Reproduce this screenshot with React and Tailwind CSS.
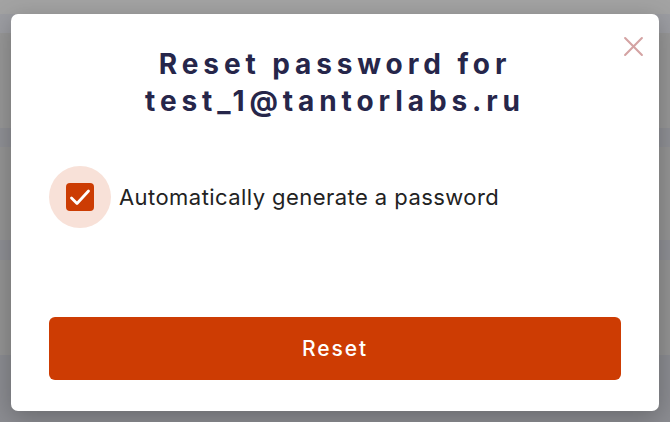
import React from "react";

const bands = [
  ["h-[14px]", "bg-[#a3a3a3]"],
  ["h-[19px]", "bg-[#9c9da2]"],
  ["h-[95px]", "bg-[#979797]"],
  ["h-[19px]", "bg-[#8f9095]"],
  ["h-[93px]", "bg-[#949494]"],
  ["h-[20px]", "bg-[#8e8f94]"],
  ["h-[95px]", "bg-[#939393]"],
  ["h-[67px]", "bg-[#8b8c91]"],
];

export default () => {
  const [checked, setChecked] = React.useState(true);

  return (
    <div
      className="relative w-[670px] h-[422px] overflow-hidden"
      style={{ fontFamily: "Inter, 'Noto Sans', sans-serif" }}
    >
      <div className="flex flex-col">
        {bands.map(([h, bg], i) => (
          <div key={i} className={`${h} ${bg}`} />
        ))}
      </div>

      <div className="absolute left-[11px] top-[14px] w-[648px] h-[397px] bg-white rounded-[7px] shadow-[0_6px_24px_rgba(0,0,0,0.25)] flex flex-col px-[38px] pb-[31px]">
        <button className="absolute right-[15px] top-[21px] w-[22px] h-[22px] flex items-center justify-center">
          <svg width="21" height="21" viewBox="0 0 20 20">
            <path
              d="M2 2 L18 18 M18 2 L2 18"
              stroke="#d4a3a3"
              strokeWidth="2"
              strokeLinecap="round"
            />
          </svg>
        </button>

        <h2 className="mt-[32px] text-center text-[28px] leading-[37px] font-bold tracking-[0.175em] text-[#26264a]">
          Reset password for
          <br />
          test_1@tantorlabs.ru
        </h2>

        <label className="mt-[46px] flex items-center gap-[8px] cursor-pointer">
          <span className="w-[62px] h-[62px] rounded-full bg-[#f8e1d8] flex items-center justify-center">
            <span
              onClick={() => setChecked(!checked)}
              className={`w-[28px] h-[28px] rounded-[4px] flex items-center justify-center ${
                checked ? "bg-[#cc3c03]" : "bg-white border-2 border-gray-400"
              }`}
            >
              {checked && (
                <svg width="28" height="28" viewBox="0 0 28 28">
                  <path
                    d="M5.5 15 L11 20.5 L22.5 8"
                    fill="none"
                    stroke="white"
                    strokeWidth="2.8"
                    strokeLinecap="round"
                    strokeLinejoin="round"
                  />
                </svg>
              )}
            </span>
          </span>
          <span className="text-[22px] tracking-[0.02em] text-[#222222]">
            Automatically generate a password
          </span>
        </label>

        <button className="mt-auto h-[63px] w-full rounded-[6px] bg-[#cd3c03] text-white text-[21px] font-medium tracking-[0.09em]">
          Reset
        </button>
      </div>
    </div>
  );
};
